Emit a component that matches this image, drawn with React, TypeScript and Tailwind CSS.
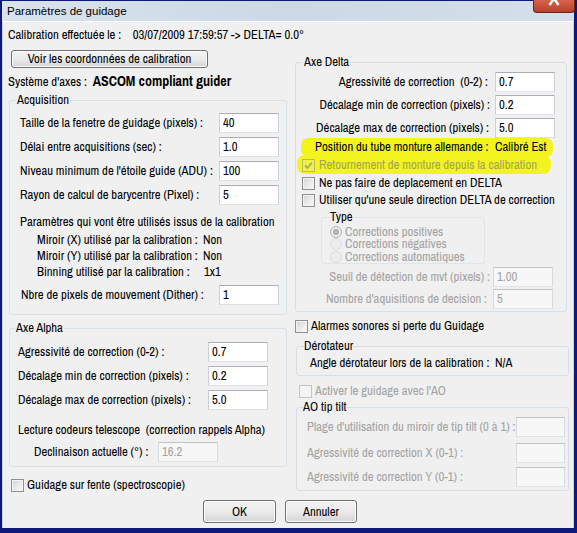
import React from "react";

const ui = "font-[family-name:Archivo_Narrow,Roboto_Condensed,Liberation_Sans_Narrow,sans-serif]";

type BoxProps = { value?: string; className?: string; disabled?: boolean };

// Win7-style single-line text box
function Box({ value = "", className = "", disabled = false }: BoxProps) {
  return (
    <div
      className={
        "h-[20px] shrink-0 border pl-[3px] leading-[18px] whitespace-pre " +
        (disabled
          ? "bg-[#f7f7f7] text-[#a3a3a3] border-t-[#c0c4c9] border-x-[#d6dadf] border-b-[#dfe3e8] "
          : "bg-white text-black border-t-[#abadb3] border-x-[#cdd1d7] border-b-[#dde1e6] ") +
        className
      }
    >
      {value}
    </div>
  );
}

type CheckProps = { checked?: boolean; variant?: "normal" | "disabled" | "marked" };

function Check({ checked = false, variant = "normal" }: CheckProps) {
  const box =
    variant === "normal"
      ? "border-[#8e8f8f] bg-linear-to-br from-[#d2d2d2] via-[#e9e9e9] to-[#fbfbfb] shadow-[inset_0_0_0_1px_#f4f4f4]"
      : variant === "disabled"
      ? "border-[#c5c5c5] bg-[#f4f4f4]"
      : "border-[#b9b96a] bg-[#f1f14a]";
  return (
    <span className={"inline-flex w-[13px] h-[13px] shrink-0 items-center justify-center border " + box}>
      {checked && (
        <svg width="9" height="9" viewBox="0 0 9 9">
          <path d="M1 4.5 L3.5 7 L8 1.5" fill="none" stroke="#a9a95e" strokeWidth="1.8" />
        </svg>
      )}
    </span>
  );
}

function Radio({ checked = false }: { checked?: boolean }) {
  return (
    <span
      className={
        "inline-flex w-[12px] h-[12px] shrink-0 rounded-full items-center justify-center border " +
        (checked ? "border-[#b4b4b4] bg-[#ececec]" : "border-[#dcdcdc] bg-[#ececec]")
      }
    >
      {checked && <span className="w-[6px] h-[6px] rounded-full bg-[#b8b8b8] border border-[#a2a2a2]" />}
    </span>
  );
}

function Button({ label, className = "" }: { label: string; className?: string }) {
  return (
    <div
      className={
        "flex items-center justify-center border border-[#707070] rounded-[3px] bg-linear-to-b from-[#f3f3f3] via-[#ebebeb] to-[#d4d4d4] shadow-[inset_0_0_0_1px_#fcfcfc] " +
        className
      }
    >
      {label}
    </div>
  );
}

export default function App() {
  return (
    <div
      className={
        "w-[577px] h-[533px] overflow-hidden bg-[#0f1a78] pt-[1px] pl-[2px] pr-[3px] pb-[5px] flex flex-col text-[12.7px] text-black " +
        ui
      }
    >
      {/* title bar */}
      <div className="h-[20px] shrink-0 flex items-start justify-between bg-linear-to-r from-[#d9e3ee] via-[#cbd8e6] to-[#d5dfea]">
        <span className="ml-[5px] mt-[1px] text-[11.5px] leading-[18px] font-[family-name:Liberation_Sans,Arial,sans-serif]">
          Paramètres de guidage
        </span>
        <div className="mt-[-1px] mr-[-1px] w-[42px] h-[13px] rounded-b-[4px] border border-t-0 border-[#6e2519] bg-linear-to-b from-[#d9634d] to-[#b7402b] flex justify-center">
          <svg width="12" height="6" viewBox="0 0 12 6">
            <path d="M6 -1.5 L1.5 5 M6 -1.5 L10.5 5" stroke="#ffffff" strokeWidth="2.4" fill="none" />
          </svg>
        </div>
      </div>

      {/* dialog body */}
      <div className="flex-1 bg-[#f0f0f0] border-t border-t-white border-x border-x-[#c9d4e0] flex flex-col">
        <div className="mt-[5px] ml-[5px] h-[16px] leading-[16px] whitespace-pre">
          Calibration effectuée le :    03/07/2009 17:59:57 -&gt; DELTA= 0.0°
        </div>

        <div className="flex items-start">
          {/* left column */}
          <div className="ml-[5px] w-[280px] flex flex-col">
            <Button label="Voir les coordonnées de calibration" className="ml-[3px] mt-[7px] w-[197px] h-[18px]" />
            <div className="mt-[5px] h-[16px] leading-[16px] whitespace-pre">
              Système d'axes :  <span className="font-bold text-[14px]">ASCOM compliant guider</span>
            </div>

            <fieldset className="mt-[3px] ml-[1px] w-[278px] border border-[#d5dfe5] rounded-[3px] pb-[9px]">
              <legend className="ml-[6px] px-[1px] leading-[16px]">Acquisition</legend>
              <div className="pl-[10px] flex flex-col">
                <div className="mt-[5px] h-[20px] flex items-center">
                  <span className="w-[199px]">Taille de la fenetre de guidage (pixels) :</span>
                  <Box value="40" className="w-[60px]" />
                </div>
                <div className="mt-[4px] h-[20px] flex items-center">
                  <span className="w-[199px]">Délai entre acquisitions (sec) :</span>
                  <Box value="1.0" className="w-[60px]" />
                </div>
                <div className="mt-[4px] h-[20px] flex items-center">
                  <span className="w-[199px]">Niveau minimum de l'étoile guide (ADU) :</span>
                  <Box value="100" className="w-[60px]" />
                </div>
                <div className="mt-[4px] h-[20px] flex items-center">
                  <span className="w-[199px]">Rayon de calcul de barycentre (Pixel) :</span>
                  <Box value="5" className="w-[60px]" />
                </div>
                <div className="mt-[9px] h-[16px] leading-[16px]">
                  Paramètres qui vont être utilisés issus de la calibration
                </div>
                <div className="pl-[17px] flex flex-col leading-[16px]">
                  <div className="h-[16px] mt-[2px] flex">
                    <span className="w-[166px]">Miroir (X) utilisé par la calibration :</span>
                    <span>Non</span>
                  </div>
                  <div className="h-[16px] flex">
                    <span className="w-[166px]">Miroir (Y) utilisé par la calibration :</span>
                    <span>Non</span>
                  </div>
                  <div className="h-[16px] flex">
                    <span className="w-[167px]">Binning utilisé par la calibration :</span>
                    <span>1x1</span>
                  </div>
                </div>
                <div className="mt-[5px] h-[20px] flex items-center">
                  <span className="ml-[1px] w-[198px]">Nbre de pixels de mouvement (Dither) :</span>
                  <Box value="1" className="w-[60px]" />
                </div>
              </div>
            </fieldset>

            <fieldset className="mt-[5px] ml-[1px] w-[278px] border border-[#d5dfe5] rounded-[3px] pb-[4px]">
              <legend className="ml-[5px] px-[1px] leading-[16px]">Axe Alpha</legend>
              <div className="pl-[8px] flex flex-col">
                <div className="mt-[6px] h-[20px] flex items-center">
                  <span className="w-[190px]">Agressivité de correction (0-2) :</span>
                  <Box value="0.7" className="w-[60px]" />
                </div>
                <div className="mt-[4px] h-[20px] flex items-center">
                  <span className="w-[190px]">Décalage min de correction (pixels) :</span>
                  <Box value="0.2" className="w-[60px]" />
                </div>
                <div className="mt-[4px] h-[20px] flex items-center">
                  <span className="w-[190px]">Décalage max de correction (pixels) :</span>
                  <Box value="5.0" className="w-[60px]" />
                </div>
                <div className="mt-[12px] h-[16px] leading-[16px] whitespace-pre">
                  Lecture codeurs telescope  (correction rappels Alpha)
                </div>
                <div className="mt-[4px] h-[20px] pl-[16px] flex items-center">
                  <span className="w-[124px]">Declinaison actuelle (°) :</span>
                  <Box value="16.2" disabled className="w-[60px]" />
                </div>
              </div>
            </fieldset>

            <div className="mt-[10px] ml-[3px] h-[16px] flex items-center gap-[3px]">
              <Check />
              <span>Guidage sur fente (spectroscopie)</span>
            </div>
          </div>

          {/* right column */}
          <div className="ml-[7px] w-[275px] flex flex-col">
            <fieldset className="mt-[11px] w-[272px] border border-[#d5dfe5] rounded-[3px] pb-[2px]">
              <legend className="ml-[7px] px-[1px] leading-[16px]">Axe Delta</legend>
              <div className="flex flex-col">
                <div className="mt-[2px] pr-[11px] h-[20px] flex items-center justify-end gap-[7px]">
                  <span className="whitespace-pre">Agressivité de correction  (0-2) :</span>
                  <Box value="0.7" className="w-[60px]" />
                </div>
                <div className="mt-[3px] pr-[11px] h-[20px] flex items-center justify-end gap-[5px]">
                  <span>Décalage min de correction (pixels) :</span>
                  <Box value="0.2" className="w-[60px]" />
                </div>
                <div className="mt-[3px] pr-[11px] h-[20px] flex items-center justify-end gap-[6px]">
                  <span>Décalage max de correction (pixels) :</span>
                  <Box value="5.0" className="w-[60px]" />
                </div>

                {/* highlighter marks behind the two mount rows */}
                <div className="relative mt-[1px] flex flex-col">
                  <div className="absolute left-[5px] top-[-1px] w-[252px] h-[19px] rounded-[7px] bg-[#f3f31f]" />
                  <div className="absolute left-[1px] top-[16px] w-[254px] h-[19px] rounded-[8px] bg-[#f3f31f]" />
                  <div className="relative h-[16px] leading-[16px] pl-[19px] flex">
                    <span className="w-[180px]">Position du tube monture allemande :</span>
                    <span>Calibré Est</span>
                  </div>
                  <div className="relative mt-[2px] h-[16px] pl-[6px] flex items-center gap-[4px]">
                    <Check checked variant="marked" />
                    <span className="text-[#a4a45a]">Retournement de monture depuis la calibration</span>
                  </div>
                </div>

                <div className="mt-[2px] h-[16px] pl-[6px] flex items-center gap-[4px]">
                  <Check />
                  <span>Ne pas faire de deplacement en DELTA</span>
                </div>
                <div className="mt-[1px] h-[16px] pl-[6px] flex items-center gap-[4px]">
                  <Check />
                  <span>Utiliser qu'une seule direction DELTA de correction</span>
                </div>

                <fieldset className="mt-[1px] ml-[25px] w-[164px] border border-[#dfe5e9] rounded-[3px]">
                  <legend className="ml-[8px] leading-[16px]">Type</legend>
                  <div className="pl-[8px] flex flex-col text-[#a3a3a3] leading-[12px]">
                    <div className="h-[13px] flex items-center gap-[3px]">
                      <Radio checked />
                      <span className="leading-[12px]">Corrections positives</span>
                    </div>
                    <div className="h-[12px] flex items-center gap-[3px]">
                      <Radio />
                      <span className="leading-[12px]">Corrections négatives</span>
                    </div>
                    <div className="h-[13px] flex items-center gap-[3px]">
                      <Radio />
                      <span className="leading-[12px]">Corrections automatiques</span>
                    </div>
                  </div>
                </fieldset>

                <div className="mt-[3px] pr-[13px] h-[20px] flex items-center justify-end gap-[3px] text-[#a3a3a3]">
                  <span>Seuil de détection de mvt (pixels) :</span>
                  <Box value="1.00" disabled className="w-[60px]" />
                </div>
                <div className="mt-[2px] pr-[13px] h-[20px] flex items-center justify-end gap-[6px] text-[#a3a3a3]">
                  <span>Nombre d'aquisitions de decision :</span>
                  <Box value="5" disabled className="w-[60px]" />
                </div>
              </div>
            </fieldset>

            <div className="mt-[6px] h-[16px] flex items-center gap-[3px]">
              <Check />
              <span>Alarmes sonores si perte du Guidage</span>
            </div>

            <fieldset className="mt-[4px] ml-[1px] w-[273px] border border-[#d5dfe5] rounded-[3px] pb-[4px]">
              <legend className="ml-[7px] leading-[16px]">Dérotateur</legend>
              <div className="mt-[1px] h-[16px] leading-[16px] pl-[13px] flex">
                <span className="w-[185px]">Angle dérotateur lors de la calibration :</span>
                <span>N/A</span>
              </div>
            </fieldset>

            <div className="mt-[7px] h-[16px] pl-[4px] flex items-center gap-[3px]">
              <Check variant="disabled" />
              <span className="text-[#a3a3a3]">Activer le guidage avec l'AO</span>
            </div>

            <fieldset className="ml-[1px] w-[273px] border border-[#d5dfe5] rounded-[3px] pb-[3px]">
              <legend className="ml-[6px] leading-[16px]">AO tip tilt</legend>
              <div className="pl-[10px] pr-[3px] flex flex-col text-[#a3a3a3]">
                <div className="mt-[2px] h-[20px] flex items-center justify-between">
                  <span>Plage d'utilisation du miroir de tip tilt (0 à 1) :</span>
                  <Box disabled className="w-[49px]" />
                </div>
                <div className="mt-[6px] h-[20px] flex items-center justify-between">
                  <span>Agressivité de correction X (0-1) :</span>
                  <Box disabled className="w-[49px]" />
                </div>
                <div className="mt-[4px] h-[20px] flex items-center justify-between">
                  <span>Agressivité de correction Y (0-1) :</span>
                  <Box disabled className="w-[49px]" />
                </div>
              </div>
            </fieldset>
          </div>
        </div>

        <div className="mt-[7px] ml-[200px] flex gap-[9px]">
          <Button label="OK" className="w-[73px] h-[23px]" />
          <Button label="Annuler" className="w-[72px] h-[23px]" />
        </div>
      </div>
    </div>
  );
}
